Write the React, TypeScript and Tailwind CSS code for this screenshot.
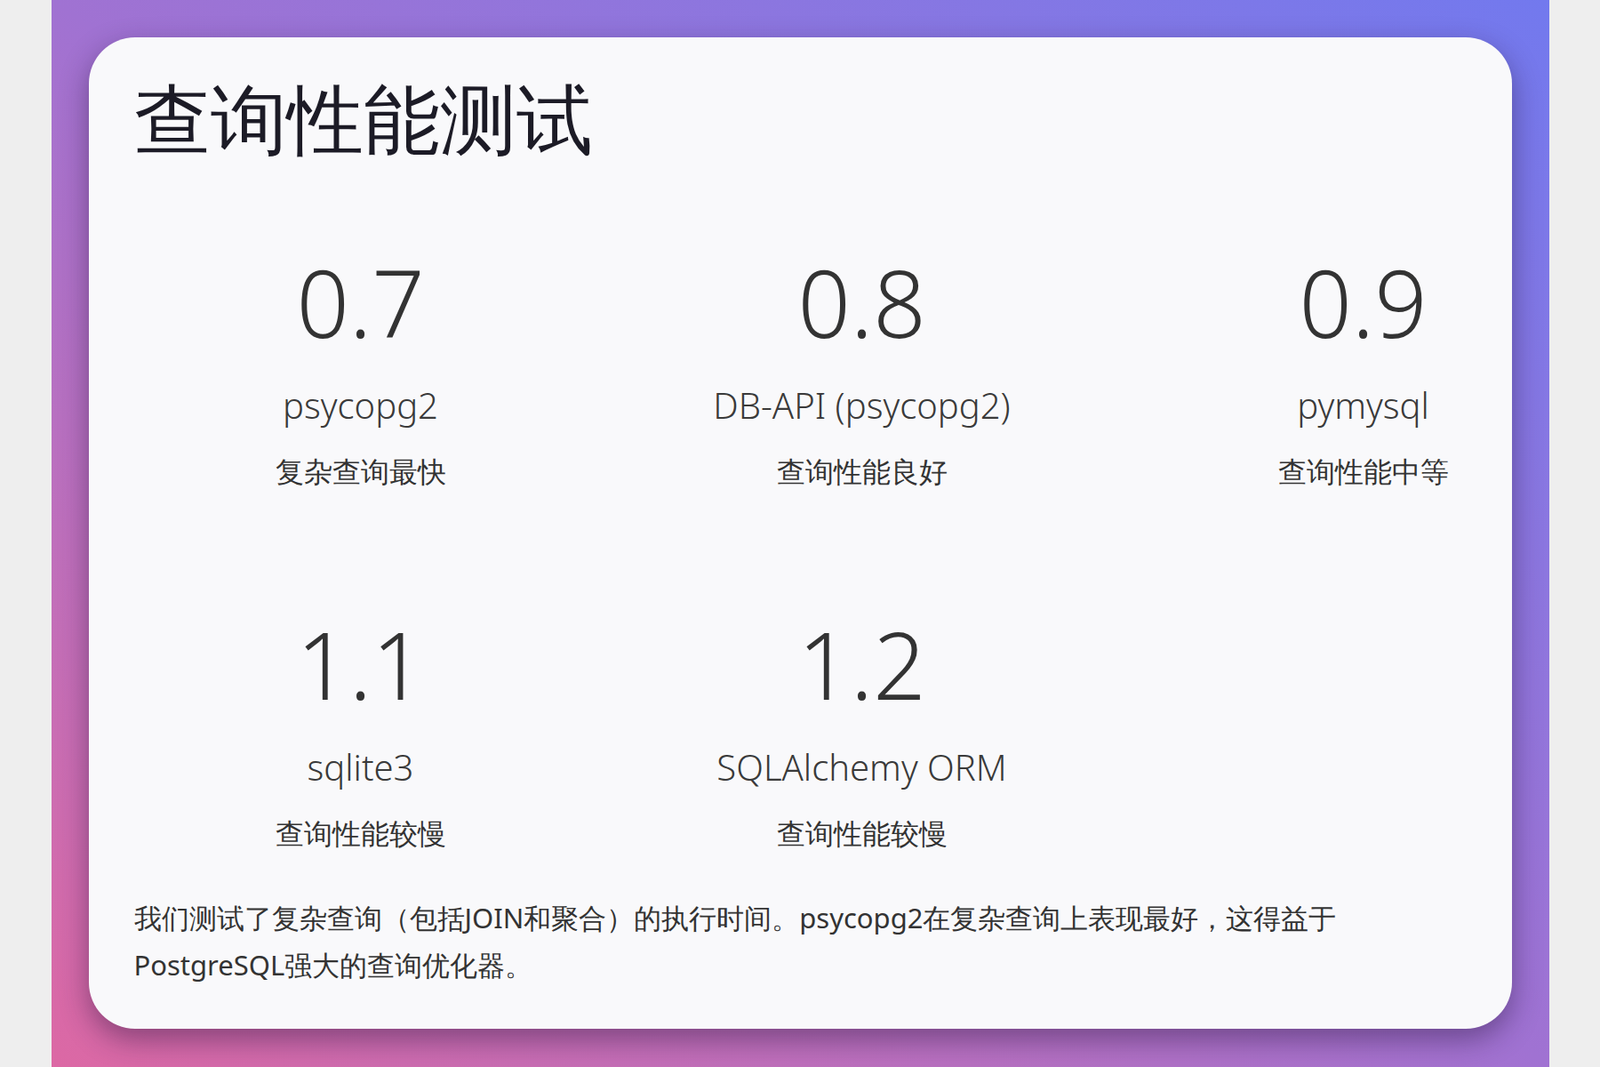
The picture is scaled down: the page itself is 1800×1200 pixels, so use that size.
const stats = [
  { value: "0.7", name: "psycopg2", note: "复杂查询最快" },
  { value: "0.8", name: "DB-API (psycopg2)", note: "查询性能良好" },
  { value: "0.9", name: "pymysql", note: "查询性能中等" },
  { value: "1.1", name: "sqlite3", note: "查询性能较慢" },
  { value: "1.2", name: "SQLAlchemy ORM", note: "查询性能较慢" },
];

export default function App() {
  return (
    <div className="flex h-[1200px] w-[1800px] justify-center overflow-hidden bg-[#eeeeee]">
      <div className="h-full w-[1685px] bg-linear-to-tr from-[#dc68a4] via-[#a072d2] to-[#7279ee] px-[42px] pt-[42px]">
        <div className="h-[1115px] rounded-[52px] bg-[#f9f9fb] px-[51px] pt-[38px] shadow-[0_12px_32px_rgba(40,20,60,0.45)]">
          <h1 className="text-[86px] leading-[1.2] text-[#1c1b26] [font-family:'Noto_Sans_CJK_SC',sans-serif]">
            查询性能测试
          </h1>
          <div className="mt-[94px] grid w-[1638px] grid-cols-[510px_510px_510px] gap-x-[54px] gap-y-[134px]">
            {stats.map((s) => (
              <div key={s.name} className="flex flex-col items-center text-center">
                <div className="text-[104px] font-light leading-[125px] text-[#333] [font-family:Lato,'Noto_Sans_CJK_SC',sans-serif]">
                  {s.value}
                </div>
                <div className="mt-[30px] text-[40px] font-light leading-[48px] text-[#3a3a3a] [font-family:Lato,'Noto_Sans_CJK_SC',sans-serif]">
                  {s.name}
                </div>
                <div className="mt-[30px] text-[32px] leading-[40px] text-[#333] [font-family:'Noto_Sans_CJK_SC',sans-serif]">
                  {s.note}
                </div>
              </div>
            ))}
          </div>
          <p className="mt-[49px] text-[31px] leading-[53px] text-[#333] [font-family:Roboto,'Noto_Sans_CJK_SC',sans-serif]">
            我们测试了复杂查询（包括JOIN和聚合）的执行时间。psycopg2在复杂查询上表现最好，这得益于PostgreSQL强大的查询优化器。
          </p>
        </div>
      </div>
    </div>
  );
}
